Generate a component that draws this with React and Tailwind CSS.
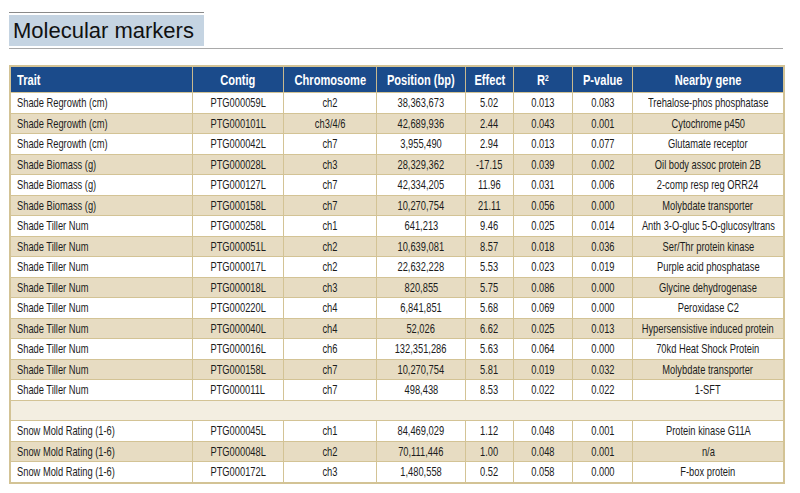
const COLS = 'grid grid-cols-[181px_91px_93px_89px_48px_59px_60px_151px]';

const ROWS = [
  ['Shade Regrowth (cm)', 'PTG000059L', 'ch2', '38,363,673', '5.02', '0.013', '0.083', 'Trehalose-phos phosphatase'],
  ['Shade Regrowth (cm)', 'PTG000101L', 'ch3/4/6', '42,689,936', '2.44', '0.043', '0.001', 'Cytochrome p450'],
  ['Shade Regrowth (cm)', 'PTG000042L', 'ch7', '3,955,490', '2.94', '0.013', '0.077', 'Glutamate receptor'],
  ['Shade Biomass (g)', 'PTG000028L', 'ch3', '28,329,362', '-17.15', '0.039', '0.002', 'Oil body assoc protein 2B'],
  ['Shade Biomass (g)', 'PTG000127L', 'ch7', '42,334,205', '11.96', '0.031', '0.006', '2-comp resp reg ORR24'],
  ['Shade Biomass (g)', 'PTG000158L', 'ch7', '10,270,754', '21.11', '0.056', '0.000', 'Molybdate transporter'],
  ['Shade Tiller Num', 'PTG000258L', 'ch1', '641,213', '9.46', '0.025', '0.014', 'Anth 3-O-gluc 5-O-glucosyltrans'],
  ['Shade Tiller Num', 'PTG000051L', 'ch2', '10,639,081', '8.57', '0.018', '0.036', 'Ser/Thr protein kinase'],
  ['Shade Tiller Num', 'PTG000017L', 'ch2', '22,632,228', '5.53', '0.023', '0.019', 'Purple acid phosphatase'],
  ['Shade Tiller Num', 'PTG000018L', 'ch3', '820,855', '5.75', '0.086', '0.000', 'Glycine dehydrogenase'],
  ['Shade Tiller Num', 'PTG000220L', 'ch4', '6,841,851', '5.68', '0.069', '0.000', 'Peroxidase C2'],
  ['Shade Tiller Num', 'PTG000040L', 'ch4', '52,026', '6.62', '0.025', '0.013', 'Hypersensistive induced protein'],
  ['Shade Tiller Num', 'PTG000016L', 'ch6', '132,351,286', '5.63', '0.064', '0.000', '70kd Heat Shock Protein'],
  ['Shade Tiller Num', 'PTG000158L', 'ch7', '10,270,754', '5.81', '0.019', '0.032', 'Molybdate transporter'],
  ['Shade Tiller Num', 'PTG000011L', 'ch7', '498,438', '8.53', '0.022', '0.022', '1-SFT'],
  null,
  ['Snow Mold Rating (1-6)', 'PTG000045L', 'ch1', '84,469,029', '1.12', '0.048', '0.001', 'Protein kinase G11A'],
  ['Snow Mold Rating (1-6)', 'PTG000048L', 'ch2', '70,111,446', '1.00', '0.048', '0.001', 'n/a'],
  ['Snow Mold Rating (1-6)', 'PTG000172L', 'ch3', '1,480,558', '0.52', '0.058', '0.000', 'F-box protein'],
];

// Liberation Sans squeezed horizontally stands in for the condensed face of the original
function Cell({ first, head, children }) {
  return (
    <div
      className={`flex items-center whitespace-nowrap leading-none ${
        first ? 'pl-[6px]' : `justify-center border-l ${head ? 'border-[#c9b98e]' : 'border-[#d3c395]'}`
      }`}
    >
      <span className={`inline-block ${head ? 'scale-x-[0.74]' : 'scale-x-[0.69]'} ${first ? 'origin-left' : 'origin-center'}`}>
        {children}
      </span>
    </div>
  );
}

function Row({ cells, shaded }) {
  return (
    <div className={`${COLS} h-[20.5px] border-b border-[#d3c395] text-[13.5px] text-[#1c1c1c] ${shaded ? 'bg-[#e7dcc2]' : 'bg-white'}`}>
      {cells.map((c, i) => (
        <Cell key={i} first={i === 0}>
          {c}
        </Cell>
      ))}
    </div>
  );
}

export default function App() {
  const heads = ['Trait', 'Contig', 'Chromosome', 'Position (bp)', 'Effect', null, 'P-value', 'Nearby gene'];
  let stripe = 0;
  return (
    <div className="h-[493px] w-[800px] bg-white px-[9px] pt-[12px] font-['Liberation_Sans',Arial,sans-serif]">
      <div className="w-[195px] border-t border-[#8a8a8a] pt-[2px]">
        <div className="flex h-[31px] items-center bg-[#c5d4e2] pl-[4px] text-[22px] leading-none text-[#111]">
          Molecular markers
        </div>
      </div>
      <div className="mt-[2px] w-[774px] border-t-[1.5px] border-[#a9a9a9]" />

      <div className="mt-[16px] w-[776px] border-2 border-b-[1px] border-[#d3c395]">
        <div className={`${COLS} h-[26px] border-b border-[#d3c395] bg-[#1b4b8b] text-[15px] font-bold text-white`}>
          {heads.map((h, i) => (
            <Cell key={i} first={i === 0} head>
              {h === null ? (
                <>
                  R<sup className="text-[9px]">2</sup>
                </>
              ) : (
                h
              )}
            </Cell>
          ))}
        </div>
        {ROWS.map((r, i) => {
          if (!r) {
            stripe = 0;
            return <div key={i} className="h-[20.5px] border-b border-[#d3c395] bg-[#f3eee1]" />;
          }
          const shaded = stripe % 2 === 1;
          stripe++;
          return <Row key={i} cells={r} shaded={shaded} />;
        })}
      </div>
    </div>
  );
}
